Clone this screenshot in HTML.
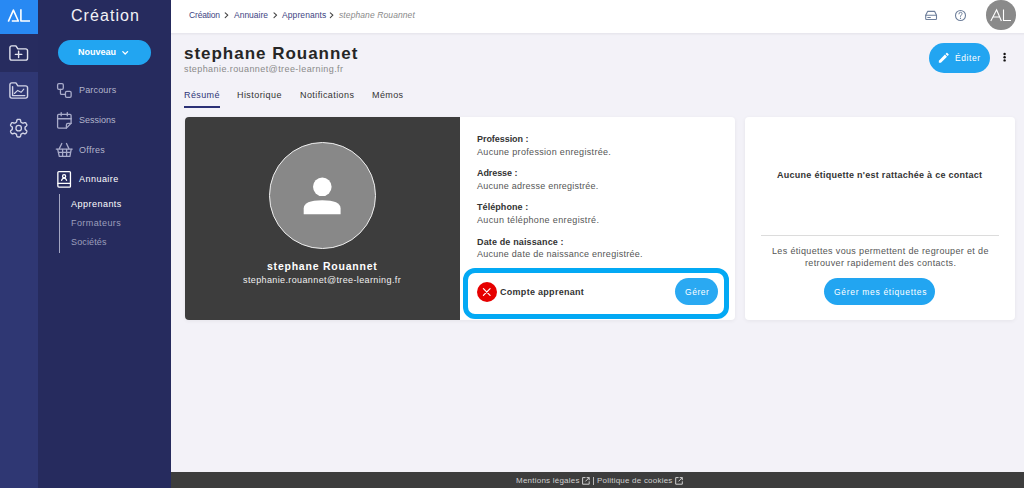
<!DOCTYPE html>
<html><head><meta charset="utf-8">
<style>
*{box-sizing:border-box;margin:0;padding:0}
html,body{width:1024px;height:488px;overflow:hidden;background:#F3F2F8;font-family:"Liberation Sans",sans-serif;}
.a{position:absolute;white-space:nowrap;line-height:1}
#rail{position:absolute;left:0;top:0;width:38px;height:488px;background:#2F3773}
#logo{position:absolute;left:0;top:0;width:37.6px;height:34px;background:#2889F3}
#railtop{position:absolute;left:0;top:34px;width:38px;height:38px;background:#272C5F}
#side{position:absolute;left:38px;top:0;width:133px;height:488px;background:#262B5E}
#topbar{position:absolute;left:171px;top:0;width:853px;height:34px;background:#fff;border-bottom:1px solid #E8E7EE;box-shadow:0 1px 1px rgba(0,0,0,0.025)}
#footer{position:absolute;left:171px;top:472px;width:853px;height:16px;background:#3D3D3D}
.nav{color:#B3B5CB;font-size:9px}
.bc{color:#3E4583;font-size:8.5px}
.card{position:absolute;background:#fff;border-radius:4px;box-shadow:0 1px 4px rgba(0,0,0,0.06)}
.lbl{color:#333;font-weight:bold;font-size:9px}
.val{color:#555;font-size:9px}
svg{position:absolute;left:0;top:0}
#t-creation{letter-spacing:1.06px}
#t-nouveau{letter-spacing:-0.00px}
#t-parcours{letter-spacing:0.17px}
#t-sessions{letter-spacing:-0.02px}
#t-offres{letter-spacing:0.27px}
#t-annuaire{letter-spacing:0.47px}
#t-apprenants{letter-spacing:0.48px}
#t-formateurs{letter-spacing:0.42px}
#t-societes{letter-spacing:0.13px}
#bc1{letter-spacing:-0.16px}
#bc2{letter-spacing:-0.01px}
#bc3{letter-spacing:0.09px}
#bc4{letter-spacing:0.10px}
#h-name{letter-spacing:0.98px}
#h-email{letter-spacing:0.42px}
#tab1{letter-spacing:0.40px}
#tab2{letter-spacing:0.43px}
#tab3{letter-spacing:0.41px}
#tab4{letter-spacing:0.40px}
#t-edit{letter-spacing:0.58px}
#d-name{letter-spacing:0.77px}
#d-email{letter-spacing:0.38px}
#l1{letter-spacing:-0.05px}
#v1{letter-spacing:0.32px}
#l2{letter-spacing:-0.08px}
#v2{letter-spacing:0.24px}
#l3{letter-spacing:0.07px}
#v3{letter-spacing:0.36px}
#l4{letter-spacing:0.14px}
#v4{letter-spacing:0.26px}
#t-compte{letter-spacing:0.29px}
#t-gerer{letter-spacing:0.53px}
#t-aucune{letter-spacing:0.27px}
#t-les{letter-spacing:0.35px}
#t-retr{letter-spacing:0.36px}
#t-etq{letter-spacing:0.69px}
#t-ment{letter-spacing:0.23px}
#t-pol{letter-spacing:0.22px}
</style></head>
<body>
<div id="rail"></div>
<div id="logo"></div>
<div id="railtop"></div>
<div id="side"></div>
<div id="topbar"></div>
<div id="footer"></div>

<!-- sidebar -->
<div class="a" id="t-creation" style="left:71px;top:8.3px;font-size:16px;color:#F2F2F6">Création</div>
<div class="a" id="btn-nouveau" style="left:58px;top:40px;width:93px;height:25px;border-radius:13px;background:#22A5F1"></div>
<div class="a" id="t-nouveau" style="left:78px;top:48px;font-size:9px;font-weight:bold;color:#fff">Nouveau</div>

<div class="a nav" id="t-parcours" style="left:79px;top:86px">Parcours</div>
<div class="a nav" id="t-sessions" style="left:79px;top:116px">Sessions</div>
<div class="a nav" id="t-offres" style="left:79px;top:146px">Offres</div>
<div class="a nav" id="t-annuaire" style="left:79px;top:175px;color:#fff">Annuaire</div>
<div class="a" style="left:59px;top:194px;width:1px;height:59px;background:#A3A6C2"></div>
<div class="a nav" id="t-apprenants" style="left:71px;top:200px;color:#fff">Apprenants</div>
<div class="a nav" id="t-formateurs" style="left:71px;top:219px;color:#9C9FBC">Formateurs</div>
<div class="a nav" id="t-societes" style="left:71px;top:238px;color:#9C9FBC">Sociétés</div>

<!-- top bar -->
<div class="a bc" id="bc1" style="left:189px;top:11px">Création</div>
<div class="a bc" id="bc2" style="left:234px;top:11px">Annuaire</div>
<div class="a bc" id="bc3" style="left:282px;top:11px">Apprenants</div>
<div class="a bc" id="bc4" style="left:339px;top:11px;color:#8A8A8A;font-style:italic">stephane Rouannet</div>

<div class="a" id="avatar" style="left:986px;top:0px;width:29.5px;height:29.5px;border-radius:50%;background:#8A8A8A"></div>

<!-- header -->
<div class="a" id="h-name" style="left:184px;top:45px;font-size:17px;font-weight:bold;color:#262626">stephane Rouannet</div>
<div class="a" id="h-email" style="left:184px;top:65px;font-size:9px;color:#8A8A8A">stephanie.rouannet@tree-learning.fr</div>
<div class="a" id="tab1" style="left:184px;top:91px;font-size:9px;color:#2E3577">Résumé</div>
<div class="a" style="left:184px;top:106px;width:36px;height:2px;background:#2B3176"></div>
<div class="a" id="tab2" style="left:237px;top:91px;font-size:9px;color:#333">Historique</div>
<div class="a" id="tab3" style="left:300px;top:91px;font-size:9px;color:#333">Notifications</div>
<div class="a" id="tab4" style="left:372px;top:91px;font-size:9px;color:#333">Mémos</div>

<div class="a" id="btn-edit" style="left:929px;top:43px;width:61px;height:30px;border-radius:15px;background:#22A5F1"></div>
<div class="a" id="t-edit" style="left:955px;top:53.5px;font-size:8.5px;color:#fff">Éditer</div>

<!-- cards -->
<div class="card" id="card1" style="left:185px;top:117px;width:550px;height:203px"></div>
<div class="a" id="dark" style="left:185px;top:117px;width:275px;height:203px;background:#3D3D3D;border-radius:4px 0 0 4px"></div>
<div class="a" id="avc" style="left:269px;top:142px;width:107px;height:107px;border-radius:50%;background:#888;border:1px solid #F0F0F0"></div>
<div class="a" id="d-name" style="left:267px;top:261px;font-size:10.5px;font-weight:bold;color:#fff">stephane Rouannet</div>
<div class="a" id="d-email" style="left:243px;top:276px;font-size:9px;color:#F0F0F0">stephanie.rouannet@tree-learning.fr</div>

<div class="a lbl" id="l1" style="left:477px;top:135px">Profession :</div>
<div class="a val" id="v1" style="left:477px;top:148px">Aucune profession enregistrée.</div>
<div class="a lbl" id="l2" style="left:477px;top:169px">Adresse :</div>
<div class="a val" id="v2" style="left:477px;top:182px">Aucune adresse enregistrée.</div>
<div class="a lbl" id="l3" style="left:477px;top:203px">Téléphone :</div>
<div class="a val" id="v3" style="left:477px;top:216px">Aucun téléphone enregistré.</div>
<div class="a lbl" id="l4" style="left:477px;top:238px">Date de naissance :</div>
<div class="a val" id="v4" style="left:477px;top:250px">Aucune date de naissance enregistrée.</div>

<div class="a" id="hl" style="left:463px;top:267.8px;width:266.3px;height:51.7px;border:5.5px solid #03A9F4;border-radius:12px"></div>
<div class="a" id="redc" style="left:477px;top:282px;width:20px;height:20px;border-radius:50%;background:#E60000"></div>
<div class="a lbl" id="t-compte" style="left:500px;top:288px">Compte apprenant</div>
<div class="a" id="btn-gerer" style="left:675.2px;top:278.3px;width:42.5px;height:27px;border-radius:14px;background:#2AA9F2"></div>
<div class="a" id="t-gerer" style="left:685px;top:287.8px;font-size:8.5px;color:#fff">Gérer</div>

<div class="card" id="card2" style="left:745px;top:117px;width:270px;height:203px"></div>
<div class="a lbl" id="t-aucune" style="left:777px;top:171px">Aucune étiquette n'est rattachée à ce contact</div>
<div class="a" style="left:761px;top:235px;width:238px;height:1px;background:#DCDCDC"></div>
<div class="a val" id="t-les" style="left:772px;top:247px">Les étiquettes vous permettent de regrouper et de</div>
<div class="a val" id="t-retr" style="left:805px;top:259px">retrouver rapidement des contacts.</div>
<div class="a" id="btn-etq" style="left:824px;top:278px;width:111px;height:27px;border-radius:14px;background:#22A5F1"></div>
<div class="a" id="t-etq" style="left:834px;top:288px;font-size:8.5px;color:#fff">Gérer mes étiquettes</div>

<!-- footer -->
<div class="a" id="t-ment" style="left:516px;top:477px;font-size:8px;color:#D0D0D0">Mentions légales</div>
<div class="a" style="left:593px;top:477px;width:1px;height:8px;background:#B8B8B8"></div>
<div class="a" id="t-pol" style="left:597px;top:477px;font-size:8px;color:#D0D0D0">Politique de cookies</div>

<svg width="1024" height="488" viewBox="0 0 1024 488" fill="none">
  <!-- AL logo -->
  <g stroke="#fff" stroke-width="1.6" stroke-linecap="butt" stroke-linejoin="round">
    <path d="M8.3 21.6 L13.4 10.1 L18.3 21.0 H11.8"/>
    <path d="M20.9 9.3 V21.0 H30"/>
  </g>
  <!-- rail icons -->
  <g stroke="#E4E5F0" stroke-width="1.4" stroke-linejoin="round" stroke-linecap="round">
    <path d="M11.9 45.85 H15.9 L17.9 48.85 H25.55 Q27.55 48.85 27.55 50.85 V58.15 Q27.55 60.15 25.55 60.15 H11.9 Q9.9 60.15 9.9 58.15 V47.85 Q9.9 45.85 11.9 45.85 Z"/>
    <path d="M15.4 54.4 H21.8 M18.6 51.3 V57.6"/>
  </g>
  <g stroke="#D2D4E6" stroke-width="1.4" stroke-linejoin="round" stroke-linecap="round">
    <path d="M11.9 82.85 H15.9 L17.9 85.85 H25.55 Q27.55 85.85 27.55 87.85 V96.1 Q27.55 98.1 25.55 98.1 H11.9 Q9.9 98.1 9.9 96.1 V84.85 Q9.9 82.85 11.9 82.85 Z"/>
    <path d="M12.6 86.6 V95.6 H24.8"/>
    <path d="M14.4 93.5 L17.7 90.4 L21.1 92.3 L23.8 89.2" stroke-width="1.1"/>
    <path d="M25.05 128.20 L25.05 128.37 L25.05 128.53 L25.05 128.70 L25.05 128.87 L25.07 129.04 L25.12 129.22 L25.21 129.41 L25.39 129.62 L25.68 129.88 L26.04 130.17 L26.39 130.48 L26.65 130.78 L26.78 131.06 L26.82 131.32 L26.80 131.56 L26.75 131.78 L26.67 132.00 L26.58 132.21 L26.48 132.42 L26.36 132.62 L26.24 132.82 L26.12 133.02 L25.98 133.20 L25.83 133.38 L25.66 133.54 L25.46 133.68 L25.22 133.77 L24.91 133.79 L24.52 133.72 L24.07 133.57 L23.64 133.41 L23.28 133.28 L23.00 133.24 L22.79 133.25 L22.61 133.30 L22.46 133.37 L22.31 133.45 L22.16 133.53 L22.02 133.62 L21.88 133.70 L21.73 133.78 L21.59 133.86 L21.44 133.95 L21.30 134.04 L21.16 134.14 L21.03 134.27 L20.91 134.44 L20.81 134.71 L20.74 135.08 L20.67 135.54 L20.57 136.00 L20.44 136.38 L20.26 136.63 L20.06 136.79 L19.84 136.90 L19.62 136.96 L19.39 137.00 L19.16 137.03 L18.93 137.05 L18.70 137.05 L18.47 137.05 L18.24 137.03 L18.01 137.00 L17.78 136.96 L17.56 136.90 L17.34 136.79 L17.14 136.63 L16.96 136.38 L16.83 136.00 L16.73 135.54 L16.66 135.08 L16.59 134.71 L16.49 134.44 L16.37 134.27 L16.24 134.14 L16.10 134.04 L15.96 133.95 L15.81 133.86 L15.67 133.78 L15.53 133.70 L15.38 133.62 L15.24 133.53 L15.09 133.45 L14.94 133.37 L14.79 133.30 L14.61 133.25 L14.40 133.24 L14.12 133.28 L13.76 133.41 L13.33 133.57 L12.88 133.72 L12.49 133.79 L12.18 133.77 L11.94 133.68 L11.74 133.54 L11.57 133.38 L11.42 133.20 L11.28 133.02 L11.16 132.82 L11.04 132.62 L10.92 132.42 L10.82 132.21 L10.73 132.00 L10.65 131.78 L10.60 131.56 L10.58 131.32 L10.62 131.06 L10.75 130.78 L11.01 130.48 L11.36 130.17 L11.72 129.88 L12.01 129.62 L12.19 129.41 L12.28 129.22 L12.33 129.04 L12.35 128.87 L12.35 128.70 L12.35 128.53 L12.35 128.37 L12.35 128.20 L12.35 128.03 L12.35 127.87 L12.35 127.70 L12.35 127.53 L12.33 127.36 L12.28 127.18 L12.19 126.99 L12.01 126.78 L11.72 126.52 L11.36 126.23 L11.01 125.92 L10.75 125.62 L10.62 125.34 L10.58 125.08 L10.60 124.84 L10.65 124.62 L10.73 124.40 L10.82 124.19 L10.92 123.98 L11.04 123.77 L11.16 123.58 L11.28 123.38 L11.42 123.20 L11.57 123.02 L11.74 122.86 L11.94 122.72 L12.18 122.63 L12.49 122.61 L12.88 122.68 L13.33 122.83 L13.76 122.99 L14.12 123.12 L14.40 123.16 L14.61 123.15 L14.79 123.10 L14.94 123.03 L15.09 122.95 L15.24 122.87 L15.38 122.78 L15.52 122.70 L15.67 122.62 L15.81 122.54 L15.96 122.45 L16.10 122.36 L16.24 122.26 L16.37 122.13 L16.49 121.96 L16.59 121.69 L16.66 121.32 L16.73 120.86 L16.83 120.40 L16.96 120.02 L17.14 119.77 L17.34 119.61 L17.56 119.50 L17.78 119.44 L18.01 119.40 L18.24 119.37 L18.47 119.35 L18.70 119.35 L18.93 119.35 L19.16 119.37 L19.39 119.40 L19.62 119.44 L19.84 119.50 L20.06 119.61 L20.26 119.77 L20.44 120.02 L20.57 120.40 L20.67 120.86 L20.74 121.32 L20.81 121.69 L20.91 121.96 L21.03 122.13 L21.16 122.26 L21.30 122.36 L21.44 122.45 L21.59 122.54 L21.73 122.62 L21.88 122.70 L22.02 122.78 L22.16 122.87 L22.31 122.95 L22.46 123.03 L22.61 123.10 L22.79 123.15 L23.00 123.16 L23.28 123.12 L23.64 122.99 L24.07 122.83 L24.52 122.68 L24.91 122.61 L25.22 122.63 L25.46 122.72 L25.66 122.86 L25.83 123.02 L25.98 123.20 L26.12 123.38 L26.24 123.58 L26.36 123.77 L26.48 123.98 L26.58 124.19 L26.67 124.40 L26.75 124.62 L26.80 124.84 L26.82 125.08 L26.78 125.34 L26.65 125.62 L26.39 125.92 L26.04 126.23 L25.68 126.52 L25.39 126.78 L25.21 126.99 L25.12 127.18 L25.07 127.36 L25.05 127.53 L25.05 127.70 L25.05 127.87 L25.05 128.03Z" stroke-width="1.4"/>
    <circle cx="18.7" cy="128.2" r="2.75" stroke-width="1.3"/>
  </g>
  <!-- sidebar nav icons -->
  <g stroke="#A9ACCA" stroke-width="1.3" stroke-linejoin="round" stroke-linecap="round">
    <rect x="57.6" y="83.6" width="5.7" height="5.7" rx="1.3"/>
    <rect x="65.45" y="91.45" width="5.7" height="5.9" rx="1.3"/>
    <path d="M60.45 89.3 V93.2 Q60.45 94.4 61.6 94.4 H65.4"/>
    <path d="M57.6 115.5 Q57.6 114.4 58.7 114.4 H70 Q71.1 114.4 71.1 115.5 V123.3 L66.4 128.1 H58.7 Q57.6 128.1 57.6 127 Z"/>
    <path d="M57.6 118.7 H71.1" stroke-width="1.5"/>
    <path d="M61.2 112.6 V115.8 M67.3 112.6 V115.8"/>
    <path d="M66.4 128.1 V125 Q66.4 123.3 68 123.3 H71.1"/>
    <path d="M56.3 149.1 H72.2"/>
    <path d="M57.7 149.3 L59.3 156.4 H69.9 L71.2 149.3"/>
    <path d="M58.5 152.4 H70.4 M62.6 149.3 V156.4 M66.6 149.3 V156.4"/>
    <path d="M61.8 143.5 L59.3 148.6 M66.5 143.5 L68.9 148.6"/>
  </g>
  <g stroke="#fff" stroke-width="1.3" stroke-linejoin="round" stroke-linecap="round">
    <path d="M58.9 171.55 H69.5 Q70.45 171.55 70.45 172.5 V186.2 Q70.45 187.15 69.5 187.15 H58.9 Q57.85 187.15 57.85 186.1 V172.6 Q57.85 171.55 58.9 171.55 Z"/>
    <path d="M57.85 183.3 H70.45"/>
    <circle cx="64.1" cy="176.2" r="1.55"/>
    <path d="M61.6 180.3 Q62.3 178.1 64.1 178.1 Q65.9 178.1 66.6 180.3"/>
  </g>
  <!-- avatar AL -->
  <g stroke="#fff" stroke-width="1.1" stroke-linejoin="miter">
    <path d="M990.8 21 L996.6 9.7 L1001.4 21 M992.8 17 H999.6"/>
    <path d="M1003.5 9.5 V20.5 H1011"/>
  </g>
  <!-- nouveau chevron -->
  <path d="M122.8 51.6 L125.2 54 L127.6 51.6" stroke="#fff" stroke-width="1.3" stroke-linecap="round" stroke-linejoin="round"/>
  <!-- breadcrumb chevrons -->
  <g stroke="#444" stroke-width="1.1" stroke-linecap="round" stroke-linejoin="round">
    <path d="M225.2 12.8 L227.8 15.2 L225.2 17.6"/>
    <path d="M274 12.8 L276.6 15.2 L274 17.6"/>
    <path d="M330.3 12.8 L332.9 15.2 L330.3 17.6"/>
  </g>
  <!-- topbar icons -->
  <g stroke="#6E7F9B" stroke-width="1.1" stroke-linejoin="round" stroke-linecap="round">
    <path d="M925.7 15.3 L927.6 11.4 H934.7 L936.5 15.3 V18.7 Q936.5 19.5 935.7 19.5 H926.5 Q925.7 19.5 925.7 18.7 Z"/>
    <path d="M925.7 15.3 H936.5"/>
    <path d="M927.8 17.5 H930.3" stroke-width="1.2"/>
    <circle cx="960.5" cy="15.5" r="5"/>
    <path d="M958.9 13.9 Q958.9 12.3 960.5 12.3 Q962.1 12.3 962.1 13.7 Q962.1 14.6 961.2 15.1 Q960.5 15.5 960.5 16.4 V16.8" stroke-width="1"/>
  </g>
  <circle cx="960.5" cy="18.4" r="0.6" fill="#6E7F9B"/>
  <!-- pencil -->
  <path transform="translate(937.2 51.2) scale(0.55)" fill="#fff" d="M3 17.25V21h3.75L17.81 9.94l-3.75-3.75L3 17.25zM20.71 7.04c.39-.39.39-1.02 0-1.41l-2.34-2.34c-.39-.39-1.02-.39-1.41 0l-1.83 1.83 3.75 3.75 1.83-1.83z"/>
  <!-- kebab -->
  <g fill="#111">
    <circle cx="1004.6" cy="54" r="1.2"/>
    <circle cx="1004.6" cy="57.2" r="1.2"/>
    <circle cx="1004.6" cy="60.4" r="1.2"/>
  </g>
  <!-- person -->
  <g fill="#fff">
    <circle cx="322.3" cy="186.8" r="9.3"/>
    <path d="M303.7 214.2 V208.5 Q303.7 200.2 322.2 200.2 Q340.6 200.2 340.6 208.5 V214.2 Z"/>
  </g>
  <!-- red x -->
  <path d="M483.4 288.7 L490.1 295.4 M490.1 288.7 L483.4 295.4" stroke="#fff" stroke-width="1.2" stroke-linecap="round"/>
  <!-- footer ext icons -->
  <g stroke="#D0D0D0" stroke-width="1" fill="none">
    <path d="M585.5 477.6 H582.6 V484.2 H589.2 V481.3"/>
    <path d="M586.6 477.6 H589.2 V480.2 M589.2 477.6 L585.4 481.4"/>
    <path d="M678.6 477.6 H675.7 V484.2 H682.3 V481.3"/>
    <path d="M679.7 477.6 H682.3 V480.2 M682.3 477.6 L678.5 481.4"/>
  </g>
</svg>
</body></html>
